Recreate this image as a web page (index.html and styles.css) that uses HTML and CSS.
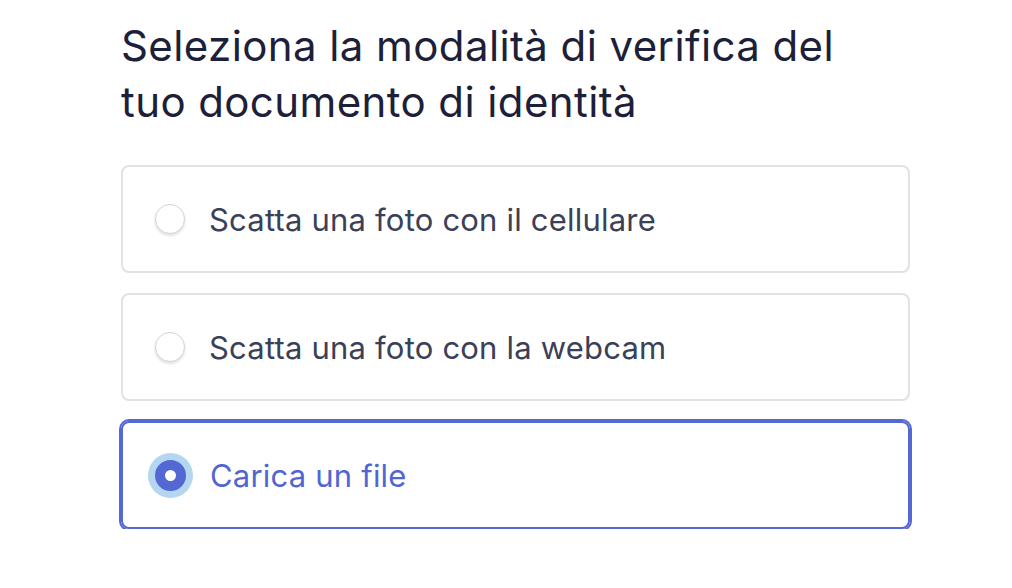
FILE: index.html
```html
<!DOCTYPE html>
<html lang="it">
<head>
    <meta charset="UTF-8">
    <meta name="viewport" content="width=device-width, initial-scale=1.0">
    <title>Verifica documento</title>
    <link rel="stylesheet" href="styles.css">
</head>
<body>
    <!--main box with title and options-->
    <div class="container">
        <h1 class="title">Seleziona la modalità di verifica del tuo documento di identità</h1>

        <!--list of verification modes-->
        <form class="options">
            <label class="option">
                <input type="radio" name="mode" value="mobile">
                <span class="option-text">Scatta una foto con il cellulare</span>
            </label>
            <label class="option">
                <input type="radio" name="mode" value="webcam">
                <span class="option-text">Scatta una foto con la webcam</span>
            </label>
            <label class="option selected">
                <input type="radio" name="mode" value="file" checked>
                <span class="option-text">Carica un file</span>
            </label>
        </form>
    </div>
</body>
</html>
```

FILE: styles.css
```css
/* reset the page */
body {
    margin: 0;
    background-color: white;
    font-family: Inter, "Noto Sans", sans-serif;
}

/* column holding everything */
.container {
    width: 789px;
    padding: 18px 0 0 121px;
}

/* big question on top */
.title {
    margin: 0 0 35px 0;
    max-width: 740px;
    font-size: 42px;
    line-height: 56px;
    font-weight: 400;
    letter-spacing: 0.4px;
    color: #1c2039;
}

/* options stacked with a gap */
.options {
    display: flex;
    flex-direction: column;
    gap: 20px;
}

/* one card per option */
.option {
    display: flex;
    align-items: center;
    gap: 24px;
    height: 104px;
    padding: 0 32px;
    border: 2px solid #e1e2e5;
    border-radius: 8px;
    cursor: pointer;
}

.option-text {
    font-size: 31px;
    letter-spacing: 0.2px;
    color: #3a4157;
}

/* the radio circle */
.option input {
    appearance: none;
    margin: 0;
    width: 30px;
    height: 30px;
    border: 1px solid #d3d4d8;
    border-radius: 50%;
    background-color: white;
    box-shadow: 0 2px 3px rgba(0, 0, 0, 0.12);
    flex-shrink: 0;
}

/* the chosen one: thicker border drawn outward */
.option.selected {
    border-color: #5468d4;
    box-shadow: 0 0 0 2px #5468d4;
}

.option.selected .option-text {
    color: #5266d1;
}

.option input:checked {
    width: 31px;
    height: 31px;
    border: 10px solid #5468d4;
    box-shadow: 0 0 0 7px #b4d6f0;
}
```
